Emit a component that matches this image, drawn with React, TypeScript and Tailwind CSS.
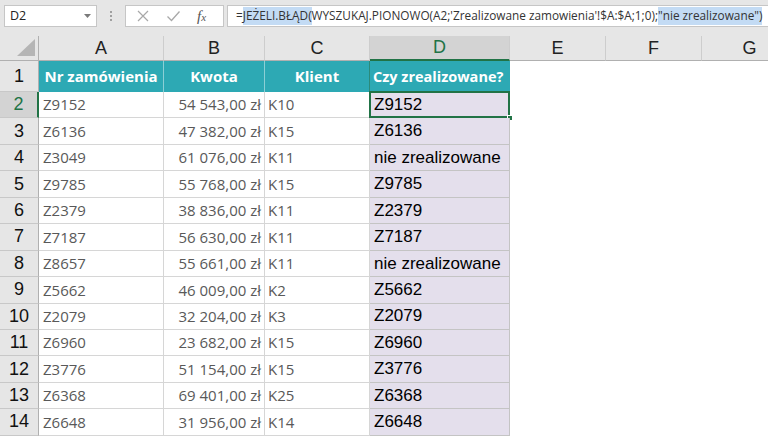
import React from "react";

const data: [string, string, string, string][] = [
  ["Z9152", "54 543,00 zł", "K10", "Z9152"],
  ["Z6136", "47 382,00 zł", "K15", "Z6136"],
  ["Z3049", "61 076,00 zł", "K11", "nie zrealizowane"],
  ["Z9785", "55 768,00 zł", "K15", "Z9785"],
  ["Z2379", "38 836,00 zł", "K11", "Z2379"],
  ["Z7187", "56 630,00 zł", "K11", "Z7187"],
  ["Z8657", "55 661,00 zł", "K11", "nie zrealizowane"],
  ["Z5662", "46 009,00 zł", "K2", "Z5662"],
  ["Z2079", "32 204,00 zł", "K3", "Z2079"],
  ["Z6960", "23 682,00 zł", "K15", "Z6960"],
  ["Z3776", "51 154,00 zł", "K15", "Z3776"],
  ["Z6368", "69 401,00 zł", "K25", "Z6368"],
  ["Z6648", "31 956,00 zł", "K14", "Z6648"],
];

function FormulaBar() {
  return (
    <div className="h-[36px] bg-[#e6e6e6] flex items-start pt-[5px] pl-[4px]">
      <div className="w-[93px] h-[22px] shrink-0 bg-white border border-[#c6c6c6] flex items-center justify-between pl-[5px] pr-[5px] font-['Open_Sans'] text-[12.5px] text-[#222]">
        <span>D2</span>
        <svg width="7" height="4" viewBox="0 0 7 4">
          <path d="M0 0h7L3.5 4z" fill="#7a7a7a" />
        </svg>
      </div>
      <div className="w-[28px] h-[22px] shrink-0 flex flex-col items-center justify-center gap-[2px]">
        <div className="w-[2px] h-[2px] bg-[#a0a0a0]" />
        <div className="w-[2px] h-[2px] bg-[#a0a0a0]" />
        <div className="w-[2px] h-[2px] bg-[#a0a0a0]" />
      </div>
      <div className="w-[99px] h-[22px] shrink-0 bg-white border border-[#c6c6c6] flex items-center">
        <svg className="ml-[10px]" width="14" height="14" viewBox="0 0 14 14">
          <path d="M2 2L12 12M12 2L2 12" stroke="#a8a8a8" strokeWidth="1.2" />
        </svg>
        <svg className="ml-[16px]" width="15" height="14" viewBox="0 0 15 14">
          <path d="M1.5 7.5L5.5 11.5L13.5 2.5" stroke="#a8a8a8" strokeWidth="1.3" fill="none" />
        </svg>
        <span className="ml-[16px] font-['Liberation_Serif'] italic text-[15px] text-[#555] leading-none">
          f<span className="text-[11px]">x</span>
        </span>
      </div>
      <div className="ml-[3px] w-[560px] h-[22px] shrink-0 bg-white border border-[#c6c6c6] flex items-center pl-[8px] font-['Open_Sans'] text-[11.8px] text-[#333] whitespace-nowrap">
        <span>=</span>
        <span className="bg-[#c3dbf4]">JEŻELI.BŁĄD(</span>
        <span>WYSZUKAJ.PIONOWO(A2;'Zrealizowane zamowienia'!$A:$A;1;0);</span>
        <span className="bg-[#c3dbf4]">"nie zrealizowane")</span>
      </div>
    </div>
  );
}

function ColHeader({ w, label, sel }: { w: string; label: string; sel?: boolean }) {
  return (
    <div
      className={
        w +
        " h-full shrink-0 flex items-center justify-center border-r border-[#cdcdcd] font-['Liberation_Sans'] text-[18px] " +
        (sel
          ? "bg-[#d3d3d3] text-[#217346] border-b-2 border-b-[#217346]"
          : "text-[#222] border-b border-b-[#b0b0b0]")
      }
    >
      {label}
    </div>
  );
}

function RowHeader({ n, h, sel }: { n: number; h: string; sel?: boolean }) {
  return (
    <div
      className={
        "w-[39px] " +
        h +
        " shrink-0 flex items-center justify-center border-b border-[#c8c8c8] font-['Liberation_Sans'] text-[18px] " +
        (sel
          ? "bg-[#d3d3d3] text-[#217346] border-r-2 border-r-[#217346]"
          : "bg-[#e6e6e6] text-[#111] border-r border-r-[#b0b0b0]")
      }
    >
      {n}
    </div>
  );
}

export default function App() {
  return (
    <div className="w-[768px] h-[436px] overflow-hidden bg-white">
      <FormulaBar />
      {/* column headers */}
      <div className="h-[25px] flex bg-[#e6e6e6]">
        <div className="w-[39px] h-full shrink-0 relative border-r border-b border-[#b0b0b0]">
          <svg className="absolute right-[3px] bottom-[4px]" width="18" height="17" viewBox="0 0 18 17">
            <path d="M18 0V17H0z" fill="#b5b5b5" />
          </svg>
        </div>
        <ColHeader w="w-[125px]" label="A" />
        <ColHeader w="w-[101px]" label="B" />
        <ColHeader w="w-[105px]" label="C" />
        <ColHeader w="w-[140px]" label="D" sel />
        <ColHeader w="w-[96px]" label="E" />
        <ColHeader w="w-[96px]" label="F" />
        <ColHeader w="w-[96px]" label="G" />
      </div>
      {/* row 1 */}
      <div className="h-[31px] flex">
        <RowHeader n={1} h="h-[31px]" />
        <div className="w-[125px] shrink-0 bg-[#2da9b4] border-r border-[#8ccfd5] flex items-center justify-center font-['Open_Sans'] font-bold text-[15px] text-white">
          Nr zamówienia
        </div>
        <div className="w-[101px] shrink-0 bg-[#2da9b4] border-r border-[#8ccfd5] flex items-center justify-center font-['Open_Sans'] font-bold text-[15px] text-white">
          Kwota
        </div>
        <div className="w-[105px] shrink-0 bg-[#2da9b4] border-r border-[#2b8a7a] flex items-center justify-center font-['Open_Sans'] font-bold text-[15px] text-white">
          Klient
        </div>
        <div className="w-[140px] shrink-0 bg-[#2da9b4] flex items-center pl-[3px] font-['Open_Sans'] font-bold text-[14.5px] text-white whitespace-nowrap">
          Czy zrealizowane?
        </div>
        <div className="flex-1 bg-white" />
      </div>
      {/* data rows */}
      {data.map((r, i) => {
        const sel = i === 0;
        return (
          <div key={i} className="h-[26.45px] flex">
            <RowHeader n={i + 2} h="h-[26.45px]" sel={sel} />
            <div className="w-[125px] shrink-0 border-r border-b border-[#d6d6d6] flex items-center pl-[4px] font-['Open_Sans'] text-[15px] text-[#595959]">
              {r[0]}
            </div>
            <div className="w-[101px] shrink-0 border-r border-b border-[#d6d6d6] flex items-center justify-end pr-[3px] font-['Open_Sans'] text-[15px] text-[#595959] whitespace-nowrap">
              {r[1]}
            </div>
            <div className="w-[105px] shrink-0 border-r border-b border-[#d6d6d6] flex items-center pl-[3px] font-['Open_Sans'] text-[15px] text-[#595959]">
              {r[2]}
            </div>
            <div className="w-[140px] shrink-0 relative bg-[#e4dfec] border-r border-b border-[#c4c4c4] flex items-center pl-[4px] font-['Liberation_Sans'] text-[17px] text-black whitespace-nowrap">
              {r[3]}
              {sel && (
                <>
                  <div className="absolute left-[-1px] top-[-1px] right-[-1px] bottom-[-1px] border-2 border-[#217346]" />
                  <div className="absolute right-[-4px] bottom-[-4px] w-[6px] h-[6px] bg-[#217346] border border-white" />
                </>
              )}
            </div>
            <div className="flex-1 bg-white" />
          </div>
        );
      })}
    </div>
  );
}
